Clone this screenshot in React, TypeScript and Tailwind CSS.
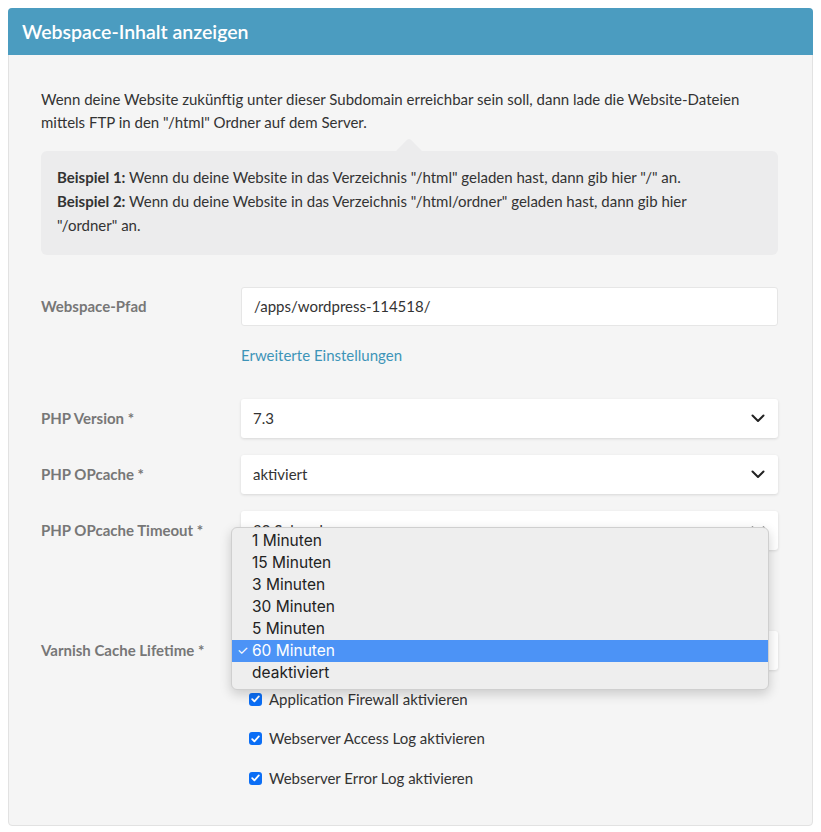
import React from "react";

const Chevron = () => (
  <svg width="14" height="9" viewBox="0 0 14 9" fill="none" className="shrink-0">
    <path d="M1.5 1.5L7 7L12.5 1.5" stroke="#222" strokeWidth="2" strokeLinecap="round" strokeLinejoin="round" />
  </svg>
);

const Select = ({ value }: { value: string }) => (
  <div className="flex h-[39px] items-center justify-between rounded-[3px] bg-white pl-3 pr-[13px] text-[15px] text-[#333] shadow-[0_1px_3px_rgba(0,0,0,0.12)]">
    <span>{value}</span>
    <Chevron />
  </div>
);

const Check = ({ label }: { label: string }) => (
  <div className="flex h-[39px] items-center gap-[7px] pl-2">
    <span className="flex h-[13px] w-[13px] items-center justify-center rounded-[3px] bg-[#0b6ef5]">
      <svg width="9" height="8" viewBox="0 0 9 8" fill="none">
        <path d="M1.2 4.2L3.4 6.4L7.8 1.4" stroke="white" strokeWidth="1.8" strokeLinecap="round" strokeLinejoin="round" />
      </svg>
    </span>
    <span className="text-[15px] text-[#333]">{label}</span>
  </div>
);

const Label = ({ children }: { children: React.ReactNode }) => (
  <div className="flex h-[39px] items-center text-[15px] font-bold text-[#777]">{children}</div>
);

export default function App() {
  const options = ["1 Minuten", "15 Minuten", "3 Minuten", "30 Minuten", "5 Minuten", "60 Minuten", "deaktiviert"];
  return (
    <div className="min-h-[832px] bg-white px-2 pt-2" style={{ fontFamily: "Lato, 'Noto Sans', sans-serif" }}>
      <div className="w-[805px] rounded-[4px] border border-[#e2e2e2] bg-[#f5f5f5]">
        <div className="-mx-px -mt-px flex h-[47px] items-center rounded-t-[4px] bg-[#4b9cc0] px-[14px]">
          <h1 className="text-[19.5px] font-semibold text-white">Webspace-Inhalt anzeigen</h1>
        </div>
        <div className="pb-[27px] pl-8 pr-[34px] pt-[33px]">
          <p className="text-[15px] leading-[23px] text-[#333]">
            Wenn deine Website zukünftig unter dieser Subdomain erreichbar sein soll, dann lade die Website-Dateien
            <br />
            mittels FTP in den "/html" Ordner auf dem Server.
          </p>
          <div className="relative mt-[17px] rounded-[6px] bg-[#ececed] px-4 pb-[18px] pt-[14px] text-[15px] leading-[24px] text-[#333]">
            <div className="absolute left-[358px] top-[-9px] h-[20px] w-[20px] rotate-45 rounded-[3px] bg-[#ececed]" />
            <div className="relative">
              <p>
                <b>Beispiel 1:</b> Wenn du deine Website in das Verzeichnis "/html" geladen hast, dann gib hier "/" an.
              </p>
              <p>
                <b>Beispiel 2:</b> Wenn du deine Website in das Verzeichnis "/html/ordner" geladen hast, dann gib hier
                <br />
                "/ordner" an.
              </p>
            </div>
          </div>

          <div className="mt-[32px] grid grid-cols-[200px_1fr]">
            <Label>Webspace-Pfad</Label>
            <div className="flex h-[39px] items-center rounded-[3px] border border-[#e6e6e6] bg-white px-3 text-[15px] text-[#333]">
              /apps/wordpress-114518/
            </div>
            <div />
            <div className="mt-[18px] text-[15px] text-[#3d94b8]">Erweiterte Einstellungen</div>
          </div>

          <div className="mt-[32px] grid grid-cols-[200px_1fr] gap-y-[17px]">
            <Label>PHP Version *</Label>
            <Select value="7.3" />
            <Label>PHP OPcache *</Label>
            <Select value="aktiviert" />
            <Label>PHP OPcache Timeout *</Label>
            <div className="relative">
              <Select value="30 Sekunden" />
              <div
                className="absolute left-[-10px] top-[16px] z-10 w-[538px] rounded-[6px] border border-[#cfcfcf] bg-[#eeeeee] pb-[5px] pt-[2px] shadow-[0_4px_12px_rgba(0,0,0,0.18)]"
                style={{ fontFamily: "Inter, 'Liberation Sans', sans-serif" }}
              >
                {options.map((o) => {
                  const sel = o === "60 Minuten";
                  return (
                    <div
                      key={o}
                      className={`relative flex h-[22px] items-center pl-[20px] text-[15.5px] ${sel ? "bg-[#4c93f6] text-white" : "text-[#222]"}`}
                    >
                      {sel && <span className="absolute left-[5px] text-[13px]">✓</span>}
                      {o}
                    </div>
                  );
                })}
              </div>
            </div>
            <div className="h-[47px]" />
            <div className="h-[47px]" />
            <Label>Varnish Cache Lifetime *</Label>
            <Select value="60 Minuten" />
          </div>

          <div className="mt-[10px] grid grid-cols-[200px_1fr]">
            <div />
            <div className="flex flex-col gap-[0.5px]">
              <Check label="Application Firewall aktivieren" />
              <Check label="Webserver Access Log aktivieren" />
              <Check label="Webserver Error Log aktivieren" />
            </div>
          </div>
        </div>
      </div>
    </div>
  );
}
